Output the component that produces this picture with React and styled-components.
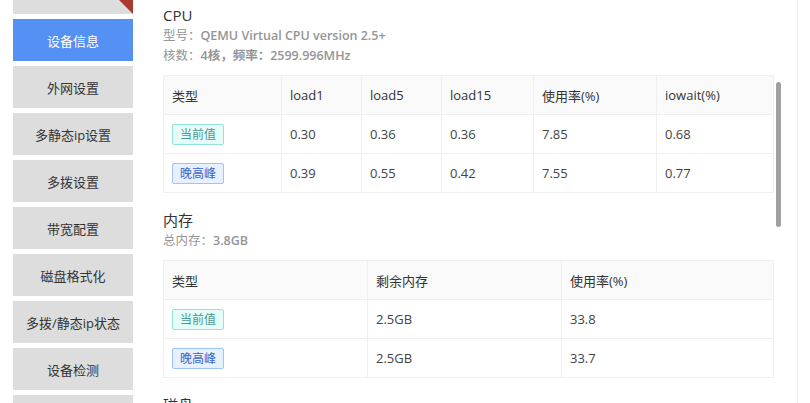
import React from 'react'
import styled, { createGlobalStyle } from 'styled-components'

const GlobalStyle = createGlobalStyle`
  html, body {
    margin: 0;
    padding: 0;
    background: #fff;
    overflow: hidden;
  }
  body {
    font-family: "Open Sans", "Noto Sans CJK SC", sans-serif;
    color: #333;
  }
`

const Page = styled.div`
  display: flex;
  height: 403px;
  overflow: hidden;
`

const Sidebar = styled.nav`
  width: 120px;
  flex: none;
  padding-left: 13px;
  margin-top: -28px;
  display: flex;
  flex-direction: column;
  gap: 5px;
`

const NavItem = styled.div`
  position: relative;
  height: 42px;
  flex: none;
  display: flex;
  align-items: center;
  justify-content: center;
  font-size: 13px;
  overflow: hidden;
  background: ${p => (p.$active ? '#5591f5' : '#dddddd')};
  color: ${p => (p.$active ? '#fff' : '#333')};

  ${p =>
    p.$marked &&
    `
    &::after {
      content: "";
      position: absolute;
      top: 0;
      right: 0;
      width: 0;
      height: 0;
      border-top: 42px solid #a83a2f;
      border-left: 42px solid transparent;
    }
  `}
`

const Main = styled.main`
  display: flex;
  padding-left: 30px;
  border-right: 1px solid #eeeeee;
  height: 403px;
  flex: none;
`

const Content = styled.div`
  width: 610px;
  padding-top: 4px;
`

const Rail = styled.div`
  width: 24px;
  flex: none;
`

const Thumb = styled.div`
  margin: 82px 0 0 3px;
  width: 5px;
  height: 145px;
  border-radius: 3px;
  background: #a0a0a0;
`

const Heading = styled.h3`
  margin: ${p => (p.$first ? '0' : '16px')} 0 0;
  font-size: 15px;
  font-weight: 400;
  line-height: 22px;
  color: #333;
`

const Meta = styled.div`
  font-size: 12.5px;
  line-height: 20px;
  color: #959595;
`

const MetaValue = styled.span`
  font-weight: 600;
`

const Table = styled.table`
  width: 610px;
  margin-top: 9px;
  border-collapse: collapse;
  table-layout: fixed;
  font-size: 13px;
  color: #444;
`

const Th = styled.th`
  height: 38px;
  padding: 0 8px;
  text-align: left;
  font-weight: 400;
  color: #333;
  background: #fafafa;
  border: 1px solid #efefef;
`

const Td = styled.td`
  height: 38px;
  padding: 0 8px;
  border: 1px solid #efefef;
`

const Tag = styled.span`
  display: inline-flex;
  align-items: center;
  height: 19px;
  padding: 0 7px;
  font-size: 12px;
  border-radius: 2px;
  border: 1px solid ${p => (p.$kind === 'peak' ? '#9cc4f5' : '#95e2da')};
  background: ${p => (p.$kind === 'peak' ? '#e6f0ff' : '#e6fcf9')};
  color: ${p => (p.$kind === 'peak' ? '#3b62c9' : '#4a9a94')};
`

const nav = ['', '设备信息', '外网设置', '多静态ip设置', '多拨设置', '带宽配置', '磁盘格式化', '多拨/静态ip状态', '设备检测', '']

const cpuCols = [
  ['类型', 118],
  ['load1', 80],
  ['load5', 80],
  ['load15', 92],
  ['使用率(%)', 123],
  ['iowait(%)', 117],
]
const cpuRows = [
  ['now', '0.30', '0.36', '0.36', '7.85', '0.68'],
  ['peak', '0.39', '0.55', '0.42', '7.55', '0.77'],
]

const memCols = [
  ['类型', 204],
  ['剩余内存', 194],
  ['使用率(%)', 212],
]
const memRows = [
  ['now', '2.5GB', '33.8'],
  ['peak', '2.5GB', '33.7'],
]

const DataTable = ({ cols, rows }) => (
  <Table>
    <colgroup>
      {cols.map(([, w], i) => (
        <col key={i} style={{ width: w }} />
      ))}
    </colgroup>
    <thead>
      <tr>
        {cols.map(([name]) => (
          <Th key={name}>{name}</Th>
        ))}
      </tr>
    </thead>
    <tbody>
      {rows.map(([kind, ...vals]) => (
        <tr key={kind}>
          <Td>
            <Tag $kind={kind}>{kind === 'peak' ? '晚高峰' : '当前值'}</Tag>
          </Td>
          {vals.map((v, i) => (
            <Td key={i}>{v}</Td>
          ))}
        </tr>
      ))}
    </tbody>
  </Table>
)

const App = () => {
  return (
    <Page>
      <GlobalStyle />
      <Sidebar>
        {nav.map((label, i) => (
          <NavItem key={i} $active={i === 1} $marked={i === 0}>
            {label}
          </NavItem>
        ))}
      </Sidebar>
      <Main>
        <Content>
          <Heading $first>CPU</Heading>
          <Meta>
            型号：<MetaValue>QEMU Virtual CPU version 2.5+</MetaValue>
          </Meta>
          <Meta>
            核数：<MetaValue>4核，频率：2599.996MHz</MetaValue>
          </Meta>
          <DataTable cols={cpuCols} rows={cpuRows} />

          <Heading>内存</Heading>
          <Meta>
            总内存：<MetaValue>3.8GB</MetaValue>
          </Meta>
          <DataTable cols={memCols} rows={memRows} />

          <Heading>磁盘</Heading>
        </Content>
        <Rail>
          <Thumb />
        </Rail>
      </Main>
    </Page>
  )
}

export default App
